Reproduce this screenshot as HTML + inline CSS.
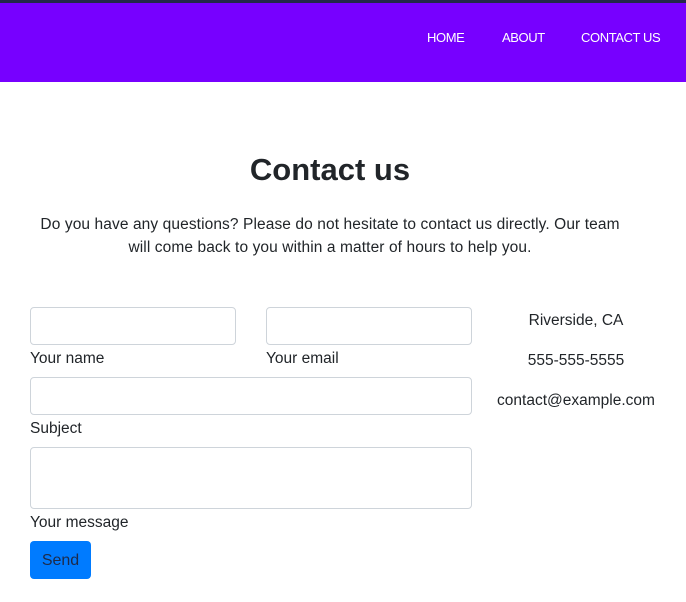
<!DOCTYPE html>
<html><head><style>
body{margin:0;width:686px;height:602px;background:#fff;font-family:"Liberation Sans",sans-serif;color:#212529;position:relative;overflow:hidden}
.top{position:absolute;left:0;top:0;width:686px;height:3px;background:#23284a}
.nav{position:absolute;left:0;top:3px;width:686px;height:79px;background:#7700ff}
.nav span{position:absolute;top:27px;color:#fff;font-size:13px;letter-spacing:-0.4px}
h1{position:absolute;left:0;width:660px;top:152px;margin:0;text-align:center;font-size:31px;font-weight:bold;color:#212529}
.p{position:absolute;left:35px;width:590px;top:213px;text-align:center;font-size:15.5px;line-height:23px;letter-spacing:0.1px}
.in{position:absolute;border:1px solid #ced4da;border-radius:4px;box-sizing:border-box;background:#fff}
.l{position:absolute;font-size:15.5px}
.btn{position:absolute;left:30px;top:541px;width:61px;height:38px;background:#007bff;border-radius:4px;color:#1d2a4a;font-size:16px;text-align:center;line-height:40px}
.r{position:absolute;left:486px;width:180px;text-align:center;font-size:15.5px}
</style></head><body>
<div class="top"></div>
<div class="nav"><span style="left:427px">HOME</span><span style="left:502px">ABOUT</span><span style="left:581px">CONTACT US</span></div>
<h1>Contact us</h1>
<div class="p">Do you have any questions? Please do not hesitate to contact us directly. Our team will come back to you within a matter of hours to help you.</div>
<div class="in" style="left:30px;top:307px;width:206px;height:38px"></div>
<div class="in" style="left:266px;top:307px;width:206px;height:38px"></div>
<div class="l" style="left:30px;top:350px">Your name</div>
<div class="l" style="left:266px;top:350px">Your email</div>
<div class="in" style="left:30px;top:377px;width:442px;height:38px"></div>
<div class="l" style="left:30px;top:420px">Subject</div>
<div class="in" style="left:30px;top:447px;width:442px;height:62px"></div>
<div class="l" style="left:30px;top:514px">Your message</div>
<div class="btn">Send</div>
<div class="r" style="top:312px">Riverside, CA</div>
<div class="r" style="top:352px">555-555-5555</div>
<div class="r" style="top:392px">contact@example.com</div>
</body></html>
